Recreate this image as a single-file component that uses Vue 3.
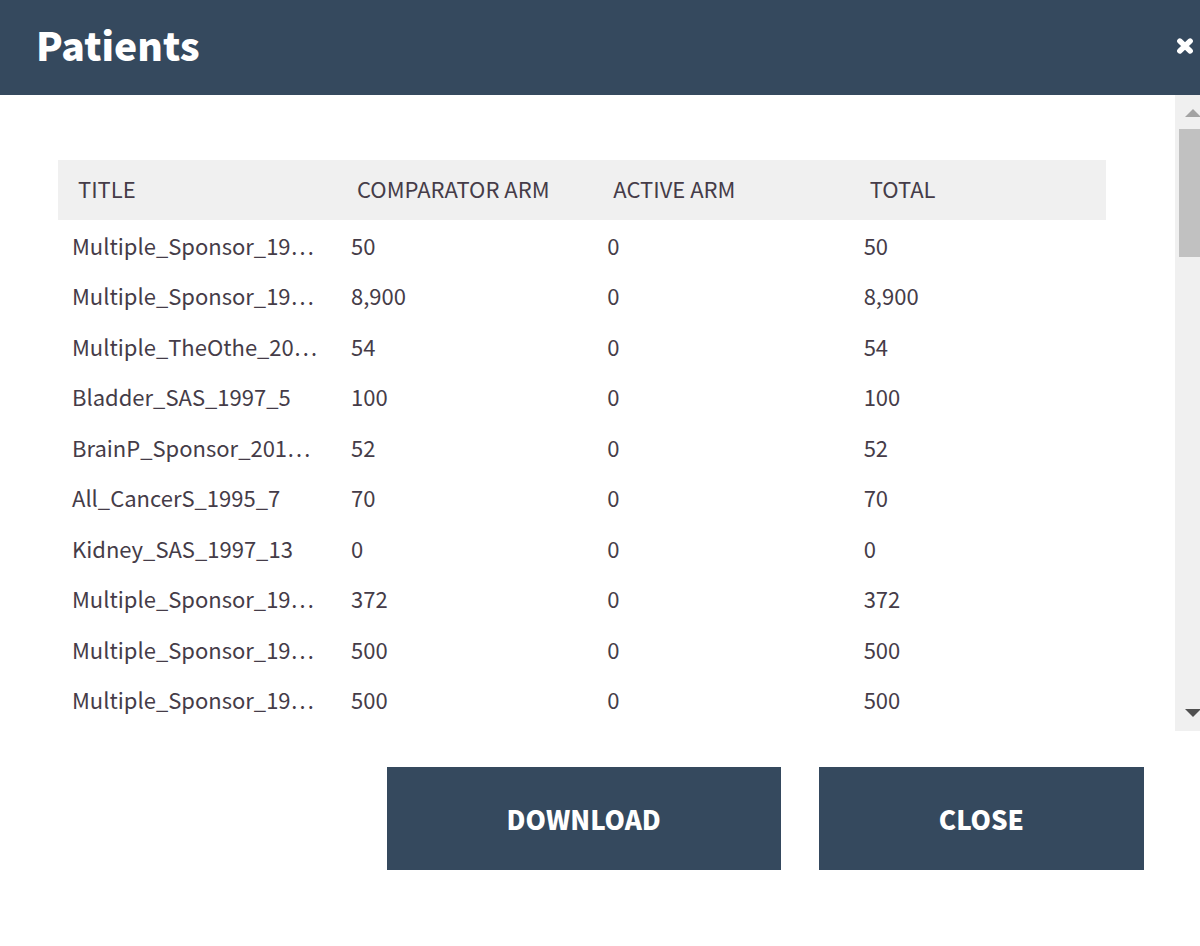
<script setup>
const columns = ['TITLE', 'COMPARATOR ARM', 'ACTIVE ARM', 'TOTAL']

const rows = [
  { title: 'Multiple_Sponsor_19…', comparator: '50', active: '0', total: '50' },
  { title: 'Multiple_Sponsor_19…', comparator: '8,900', active: '0', total: '8,900' },
  { title: 'Multiple_TheOthe_20…', comparator: '54', active: '0', total: '54' },
  { title: 'Bladder_SAS_1997_5', comparator: '100', active: '0', total: '100' },
  { title: 'BrainP_Sponsor_201…', comparator: '52', active: '0', total: '52' },
  { title: 'All_CancerS_1995_7', comparator: '70', active: '0', total: '70' },
  { title: 'Kidney_SAS_1997_13', comparator: '0', active: '0', total: '0' },
  { title: 'Multiple_Sponsor_19…', comparator: '372', active: '0', total: '372' },
  { title: 'Multiple_Sponsor_19…', comparator: '500', active: '0', total: '500' },
  { title: 'Multiple_Sponsor_19…', comparator: '500', active: '0', total: '500' },
]
</script>

<template>
  <section class="dialog" role="dialog" aria-labelledby="dialog-title">
    <header class="dialog-header">
      <h1 id="dialog-title">Patients</h1>
      <button class="dismiss" type="button" aria-label="Close dialog">
        <svg viewBox="0 0 18 18" width="18" height="18" aria-hidden="true">
          <path d="M3.8 4L14.2 14M14.2 4L3.8 14" />
        </svg>
      </button>
    </header>

    <div class="dialog-body">
      <div class="content">
        <table>
          <colgroup>
            <col class="title-col" />
            <col />
            <col />
            <col />
          </colgroup>
          <thead>
            <tr>
              <th v-for="column in columns" :key="column" scope="col">{{ column }}</th>
            </tr>
          </thead>
          <tbody>
            <tr v-for="(row, index) in rows" :key="index">
              <td>{{ row.title }}</td>
              <td>{{ row.comparator }}</td>
              <td>{{ row.active }}</td>
              <td>{{ row.total }}</td>
            </tr>
          </tbody>
        </table>
      </div>
      <div class="scrollbar" aria-hidden="true">
        <svg class="arrow up" viewBox="0 0 16 8" width="16" height="8"><path d="M0 8L8 0L16 8Z" /></svg>
        <div class="thumb"></div>
        <svg class="arrow down" viewBox="0 0 16 8" width="16" height="8"><path d="M0 0L8 8L16 0Z" /></svg>
      </div>
    </div>

    <footer class="dialog-footer">
      <button type="button">DOWNLOAD</button>
      <button type="button">CLOSE</button>
    </footer>
  </section>
</template>

<style>
body {
  background: #fff;
}
</style>

<style scoped>
.dialog {
  font-family: "Noto Sans CJK KR", "Noto Sans", sans-serif;
  color: #453c48;
  font-size: 22px;
}

.dialog-header {
  display: flex;
  align-items: center;
  justify-content: space-between;
  height: 95px;
  padding: 0 6px 3px 36px;
  box-sizing: border-box;
  background: #35495e;
  color: #fff;
}

h1 {
  margin: 0;
  padding-bottom: 4px;
  font-size: 39px;
  line-height: 48px;
  font-weight: 900;
}

.dismiss {
  display: flex;
  padding: 0;
  border: 0;
  background: none;
  color: inherit;
  cursor: pointer;
}

.dismiss path {
  fill: none;
  stroke: currentColor;
  stroke-width: 5.4;
  stroke-linecap: round;
}

.dialog-body {
  display: flex;
}

.content {
  flex: 1;
  min-width: 0;
  padding: 65px 69px 6px 58px;
}

table {
  width: 100%;
  table-layout: fixed;
  border-collapse: collapse;
}

.title-col {
  width: 279px;
}

th {
  height: 60px;
  padding: 0 0 4px 20px;
  box-sizing: border-box;
  background: #f0f0f0;
  font-weight: 400;
  text-align: left;
  line-height: 32px;
  white-space: nowrap;
}

td {
  padding: 0 0 0 14px;
  line-height: 51px;
  white-space: nowrap;
}

tr:nth-child(odd) td {
  line-height: 50px;
}

.scrollbar {
  display: flex;
  flex-direction: column;
  width: 25px;
  padding: 14px 0;
  box-sizing: border-box;
  overflow: hidden;
  background: #f0f0f0;
}

.arrow {
  flex: none;
  margin-left: 10px;
}

.up {
  fill: #a3a3a3;
}

.down {
  margin-top: auto;
  fill: #505050;
}

.thumb {
  height: 128px;
  margin: 12px 0 0 4px;
  background: #c1c1c1;
}

.dialog-footer {
  display: flex;
  justify-content: flex-end;
  gap: 38px;
  padding: 36px 56px 36px 36px;
}

.dialog-footer button {
  height: 103px;
  padding: 0 120px;
  border: 0;
  background: #35495e;
  color: #fff;
  font: inherit;
  font-size: 26px;
  font-weight: 900;
  cursor: pointer;
}
</style>
